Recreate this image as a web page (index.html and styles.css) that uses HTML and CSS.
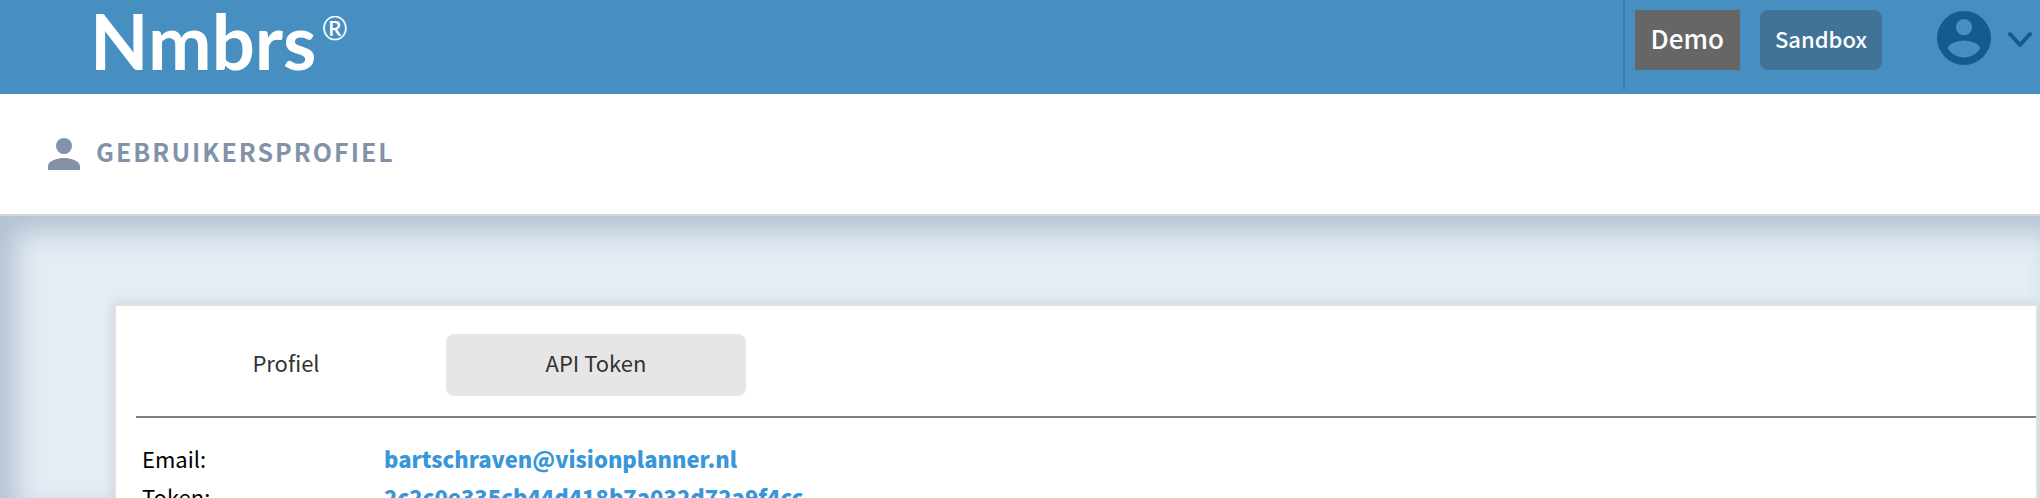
FILE: index.html
```
<!DOCTYPE html>
<html lang="nl">
<head>
    <meta charset="UTF-8">
    <meta name="viewport" content="width=device-width, initial-scale=1.0">
    <title>Nmbrs - Gebruikersprofiel</title>
    <link rel="stylesheet" href="styles.css">
</head>
<body>
    <header class="topbar">
        <a class="logo" href="#">Nmbrs<sup class="logo-mark">®</sup></a>

        <div class="topbar-actions">
            <span class="badge badge-demo">Demo</span>
            <span class="badge badge-sandbox">Sandbox</span>
            <button class="account-button" type="button" aria-label="Account">
                <svg class="account-icon" viewBox="2 2 20 20">
                    <path d="M12 2a10 10 0 1 0 0 20 10 10 0 0 0 0-20zm0 3a3 3 0 1 1 0 6 3 3 0 0 1 0-6zm0 14.200c-2.500 0-4.700-1.300-6-3.200 0-2 4-3.100 6-3.100s6 1.100 6 3.100c-1.300 1.900-3.500 3.200-6 3.200z"/>
                </svg>
                <svg class="chevron-icon" viewBox="0 0 24 20">
                    <path d="M2 6l10 11L22 6"/>
                </svg>
            </button>
        </div>
    </header>

    <div class="page-header">
        <svg class="person-icon" viewBox="4 4 16 16">
            <path d="M12 12a4 4 0 1 0 0-8 4 4 0 0 0 0 8zm0 2c-2.700 0-8 1.300-8 4v2h16v-2c0-2.700-5.300-4-8-4z"/>
        </svg>
        <h1 class="page-title">Gebruikersprofiel</h1>
    </div>

    <main class="content">
        <section class="card">
            <nav class="tabs">
                <button class="tab" type="button">Profiel</button>
                <button class="tab active" type="button">API Token</button>
            </nav>

            <dl class="details">
                <dt>Email:</dt>
                <dd>bartschraven@visionplanner.nl</dd>
                <dt>Token:</dt>
                <dd>2c2c0e335cb44d418b7a032d72a9f4cc</dd>
            </dl>
        </section>
    </main>
</body>
</html>
```

FILE: styles.css
```
* {
    margin: 0;
    padding: 0;
    box-sizing: border-box;
}

body {
    font-family: "Noto Sans CJK SC", "Open Sans", sans-serif;
    font-size: 22px;
    line-height: 38px;
    height: 100vh;
    display: flex;
    flex-direction: column;
    overflow: hidden;
    background: #fff;
    color: #000;
}

button {
    font: inherit;
    border: none;
    background: none;
    cursor: pointer;
}

/* Top bar */
.topbar {
    display: flex;
    flex-shrink: 0;
    justify-content: space-between;
    height: 94px;
    padding-left: 90px;
    background: #478fc0;
}

.logo {
    display: flex;
    align-items: flex-start;
    font-family: Lato, sans-serif;
    font-size: 76px;
    font-weight: 700;
    line-height: 82px;
    color: #fff;
    text-decoration: none;
}

.logo-mark {
    margin-left: 5px;
    font-size: 32px;
    font-weight: 400;
    line-height: 56px;
}

.topbar-actions {
    display: flex;
    align-items: flex-start;
    gap: 20px;
    height: 90px;
    padding: 10px 8px 0 10px;
    border-left: 2px solid #377fb0;
}

.badge {
    height: 60px;
    line-height: 56px;
    color: #fff;
    font-weight: 500;
}

.badge-demo {
    padding: 0 16px;
    font-size: 26px;
    background: #666;
}

.badge-sandbox {
    padding: 0 15px;
    border-radius: 8px;
    background: #417399;
}

.account-button {
    display: flex;
    align-items: center;
    gap: 17px;
    height: 56px;
    margin-left: 35px;
}

.account-icon {
    width: 54px;
    height: 54px;
    fill: #135c8d;
}

.chevron-icon {
    width: 24px;
    height: 20px;
    fill: none;
    stroke: #135c8d;
    stroke-width: 4;
    stroke-linecap: round;
    stroke-linejoin: round;
}

/* Page header */
.page-header {
    display: flex;
    flex-shrink: 0;
    align-items: center;
    gap: 16px;
    height: 122px;
    padding-left: 48px;
    border-bottom: 2px solid #d8d8d8;
}

.person-icon {
    width: 32px;
    height: 32px;
    fill: #8293a9;
}

.page-title {
    padding-bottom: 6px;
    font-size: 25px;
    font-weight: 700;
    letter-spacing: 2px;
    text-transform: uppercase;
    color: #8293a9;
}

/* Content */
.content {
    flex: 1;
    min-height: 0;
    padding: 88px 2px 0 114px;
    background: #e4ecf4;
    box-shadow: inset 15px 15px 28px #b2c1d0;
}

.card {
    padding: 28px 0 28px 20px;
    border: 2px solid #dfe1e3;
    background: #fff;
    box-shadow: 0 0 10px rgba(130, 147, 169, 0.3);
}

.tabs {
    display: flex;
    gap: 10px;
    padding-bottom: 20px;
    border-bottom: 2px solid #808080;
}

.tab {
    width: 300px;
    height: 62px;
    padding-bottom: 6px;
    border-radius: 8px;
    color: #333;
}

.tab.active {
    background: #e6e6e6;
}

.details {
    display: grid;
    grid-template-columns: 242px 1fr;
    padding: 21px 6px;
}

.details dd {
    font-weight: 900;
    color: #3996d8;
}
```
